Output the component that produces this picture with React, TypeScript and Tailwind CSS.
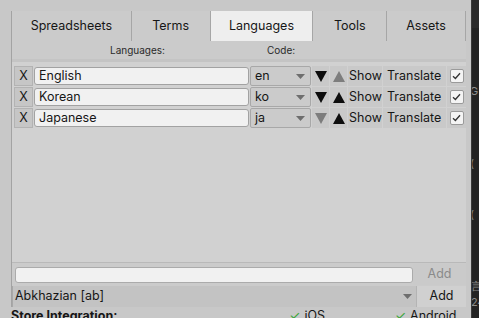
import React from 'react';

const tabs = [
  { label: 'Spreadsheets', w: 'w-[119px]' },
  { label: 'Terms', w: 'w-[79px]' },
  { label: 'Languages', w: 'w-[103px]', active: true },
  { label: 'Tools', w: 'w-[74px]' },
  { label: 'Assets', w: 'w-[80px]' },
];

const langs = [
  { name: 'English', code: 'en', down: true, up: false },
  { name: 'Korean', code: 'ko', down: true, up: true },
  { name: 'Japanese', code: 'ja', down: false, up: true },
];

const Caret = () => (
  <svg width="9" height="5" viewBox="0 0 9 5" className="shrink-0">
    <path d="M0 0 H9 L4.5 5 Z" fill="#6e6e6e" />
  </svg>
);

const Arrow = ({ up, on }: { up?: boolean; on: boolean }) => (
  <svg width="12" height="11" viewBox="0 0 12 11">
    <path d={up ? 'M6 0 L12 11 H0 Z' : 'M0 0 H12 L6 11 Z'} fill={on ? '#0d0d0d' : '#7d7d7d'} />
  </svg>
);

const App = () => {
  return (
    <div className="w-[479px] h-[318px] overflow-hidden flex bg-[#c8c8c8] text-[#161616]" style={{ fontFamily: 'Inter, "Liberation Sans", sans-serif' }}>
      <div className="w-[471px] pl-[11px] pr-[5px] pt-[11px] flex flex-col">
        <div className="border-l border-[#a3a3a3] bg-[#cbcbcb] flex flex-col">
          {/* tabs */}
          <div className="flex h-[30px]">
            {tabs.map((t, i) => (
              <div
                key={t.label}
                className={`${t.w} flex items-center justify-center text-[12.5px] ${t.active ? 'bg-[#eeeeee]' : ''} ${i > 0 ? 'border-l border-[#a6a6a6]' : ''} ${i === tabs.length - 1 ? 'border-r border-[#a6a6a6]' : ''}`}
              >
                {t.label}
              </div>
            ))}
          </div>

          {/* column headers */}
          <div className="h-[18px] flex items-center text-[10px] text-[#2a2a2a]">
            <span className="ml-[98px]">Languages:</span>
            <span className="ml-[102px]">Code:</span>
          </div>

          {/* list */}
          <div className="h-[204px] bg-[#d1d1d1] border-t-[3px] border-[#c4c4c4] border-b border-b-[#b9b9b9] pt-[4px] pl-[2px] flex flex-col gap-px">
            {langs.map((l) => (
              <div key={l.name} className="h-[20px] flex gap-px text-[12.5px]">
                <div className="w-[19px] bg-[#c6c6c6] border border-[#b3b3b3] flex items-center justify-center">X</div>
                <div className="w-[215px] flex items-center">
                  <div className="w-full h-[18px] bg-[#f1f1f1] border border-[#a2a2a2] rounded-[3px] flex items-center pl-[4px]">{l.name}</div>
                </div>
                <div className="w-[61px] bg-[#cbcbcb] border border-[#a8a8a8] rounded-[2px] flex items-center justify-between pl-[4px] pr-[5px]">
                  <span>{l.code}</span>
                  <Caret />
                </div>
                <div className="w-[17px] bg-[#c9c9c9] flex items-center justify-center">
                  <Arrow on={l.down} />
                </div>
                <div className="w-[17px] bg-[#c9c9c9] flex items-center justify-center">
                  <Arrow up on={l.up} />
                </div>
                <div className="w-[34px] bg-[#c9c9c9] flex items-center pl-[1px] overflow-hidden whitespace-nowrap text-[12.5px]">Show</div>
                <div className="w-[63px] bg-[#c9c9c9] flex items-center pl-[4px]">Translate</div>
                <div className="w-[19px] bg-[#c9c9c9] flex items-center justify-center">
                  <div className="w-[14px] h-[14px] bg-[#f4f4f4] border border-[#9a9a9a] rounded-[2px] flex items-center justify-center">
                    <svg width="9" height="8" viewBox="0 0 9 8">
                      <path d="M1 4.2 L3.4 6.5 L8 1.2" stroke="#333" strokeWidth="1.3" fill="none" />
                    </svg>
                  </div>
                </div>
              </div>
            ))}
          </div>

          {/* new language input */}
          <div className="h-[23px] flex items-center">
            <div className="flex-1 h-[16px] ml-[3px] bg-[#f1f1f1] border border-[#ababab] rounded-[3px]" />
            <div className="w-[53px] h-[21px] bg-[#cacaca] text-[12.5px] text-[#8a8a8a] flex items-center justify-center">Add</div>
          </div>

          {/* language dropdown */}
          <div className="h-[21px] flex">
            <div className="flex-1 bg-[#c3c3c3] border-l border-[#a8a8a8] flex items-center justify-between pl-[2px] pr-[4px] text-[12.5px]">
              <span>Abkhazian [ab]</span>
              <Caret />
            </div>
            <div className="w-[50px] bg-[#d0d0d0] border-l border-[#b4b4b4] text-[12.5px] flex items-center justify-center">Add</div>
          </div>
        </div>

        <div className="flex items-start text-[12.5px] h-[16px] pt-[2px] leading-[14px] whitespace-nowrap">
          <span className="font-bold">Store Integration:</span>
          <span className="ml-[172px] text-[#3aa63a]">✓</span>
          <span className="ml-[4px]">iOS</span>
          <span className="ml-[70px] text-[#3aa63a]">✓</span>
          <span className="ml-[4px]">Android</span>
        </div>
      </div>

      <div className="w-[8px] bg-[#232323] flex flex-col overflow-hidden text-[11px] text-[#8d8d8d] border-l border-[#3a3a3a]">
        <div className="h-[28px] bg-[#2a2a2a]" />
        <div className="mt-[55px] -ml-[2px]">G</div>
        <div className="mt-[55px] -ml-[2px]">(</div>
        <div className="mt-[35px] -ml-[2px]">(</div>
        <div className="mt-[55px] -ml-[1px]">言</div>
        <div className="-ml-[1px]">24</div>
      </div>
    </div>
  );
};

export default App;
